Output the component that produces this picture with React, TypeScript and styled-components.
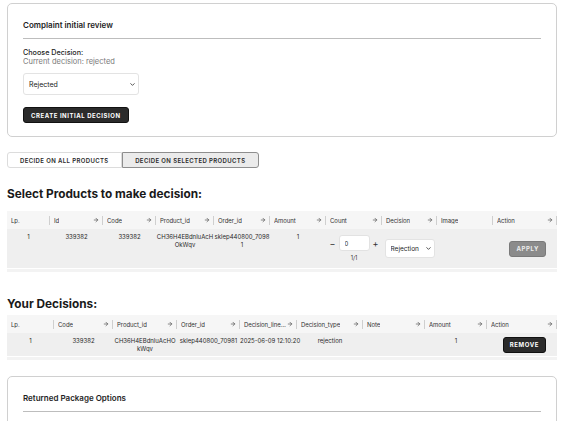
import React from "react";
import styled, { createGlobalStyle } from "styled-components";
import { ArrowRight, ChevronDown } from "lucide-react";

const GlobalStyle = createGlobalStyle`
  html, body {
    margin: 0;
    padding: 0;
    background: #ffffff;
  }
  body {
    font-family: Inter, "Noto Sans", "Liberation Sans", sans-serif;
    color: #222222;
  }
  * {
    box-sizing: border-box;
  }
`;

interface Column {
  readonly label: string;
  readonly sortable: boolean;
}

const productColumns: Column[] = [
  { label: "Lp.", sortable: false },
  { label: "Id", sortable: true },
  { label: "Code", sortable: true },
  { label: "Product_id", sortable: true },
  { label: "Order_id", sortable: true },
  { label: "Amount", sortable: true },
  { label: "Count", sortable: true },
  { label: "Decision", sortable: true },
  { label: "Image", sortable: false },
  { label: "Action", sortable: true },
];

const decisionColumns: Column[] = [
  { label: "Lp.", sortable: false },
  { label: "Code", sortable: true },
  { label: "Product_id", sortable: true },
  { label: "Order_id", sortable: true },
  { label: "Decision_line_created", sortable: true },
  { label: "Decision_type", sortable: true },
  { label: "Note", sortable: true },
  { label: "Amount", sortable: true },
  { label: "Action", sortable: true },
];

const productGrid = "43px 53px 53px 58px 56px 56px 56px 55px 56px 1fr";
const decisionGrid = "47px 59px 64px 63px 57px 66px 62px 62px 1fr";

export default function App() {
  return (
    <>
      <GlobalStyle />
      <Page>
        <Card>
          <CardTitle>Complaint initial review</CardTitle>
          <CardBody>
            <FieldLabel>Choose Decision:</FieldLabel>
            <Hint>Current decision: rejected</Hint>
            <SelectWrap width={116} height={22}>
              <Select defaultValue="rejected" fontSize={7}>
                <option value="rejected">Rejected</option>
                <option value="accepted">Accepted</option>
              </Select>
              <SelectIcon size={7} strokeWidth={2.6} />
            </SelectWrap>
            <DarkButton>Create initial decision</DarkButton>
          </CardBody>
        </Card>

        <Tabs>
          <Tab>Decide on all products</Tab>
          <Tab active>Decide on selected products</Tab>
        </Tabs>

        <SectionHeading>Select Products to make decision:</SectionHeading>
        <Table>
          <HeaderRow columns={productGrid}>
            {productColumns.map(c => (
              <HeaderCell key={c.label} column={c} />
            ))}
          </HeaderRow>
          <DataRow columns={productGrid} tall>
            <Cell>1</Cell>
            <Cell>339382</Cell>
            <Cell>339382</Cell>
            <Cell>CH36H4EBdnluAcHOkWqv</Cell>
            <Cell>sklep440800_70981</Cell>
            <Cell>1</Cell>
            <WidgetCell>
              <Counter>
                <StepSign>−</StepSign>
                <CountInput defaultValue="0" />
                <StepSign>+</StepSign>
              </Counter>
              <CountNote>1/1</CountNote>
            </WidgetCell>
            <WidgetCell>
              <SelectWrap width={50} height={19}>
                <Select defaultValue="rejection" fontSize={6.5}>
                  <option value="rejection">Rejection</option>
                  <option value="acceptance">Acceptance</option>
                </Select>
                <SelectIcon size={7} strokeWidth={2.6} />
              </SelectWrap>
            </WidgetCell>
            <Cell />
            <WidgetCell>
              <RowButton muted>Apply</RowButton>
            </WidgetCell>
          </DataRow>
          <TableFooter />
        </Table>

        <SectionHeading second>Your Decisions:</SectionHeading>
        <Table>
          <HeaderRow columns={decisionGrid}>
            {decisionColumns.map(c => (
              <HeaderCell key={c.label} column={c} />
            ))}
          </HeaderRow>
          <DataRow columns={decisionGrid}>
            <Cell>1</Cell>
            <Cell>339382</Cell>
            <Cell>CH36H4EBdnluAcHOkWqv</Cell>
            <Cell>sklep440800_70981</Cell>
            <Cell nowrap>2025-06-09 12:10:20</Cell>
            <Cell>rejection</Cell>
            <Cell />
            <Cell>1</Cell>
            <WidgetCell>
              <RowButton>Remove</RowButton>
            </WidgetCell>
          </DataRow>
          <TableFooter />
        </Table>

        <Card spaced>
          <CardTitle>Returned Package Options</CardTitle>
          <CardBody tall />
        </Card>
      </Page>
    </>
  );
}

interface HeaderCellProps {
  readonly column: Column;
}
function HeaderCell({ column }: HeaderCellProps) {
  return (
    <HeadCell>
      <HeadLabel>{column.label}</HeadLabel>
      {column.sortable && <SortIcon size={6} strokeWidth={2.5} />}
    </HeadCell>
  );
}

const Page = styled.div`
  padding: 3px 7px 0;
  display: flex;
  flex-direction: column;
`;

interface CardProps {
  readonly spaced?: boolean;
}
const Card = styled.section<CardProps>`
  border: 1px solid #d0d0d0;
  border-radius: 5px;
  padding: 0 15px 13px;
  margin-top: ${({ spaced }) => (spaced ? "16px" : "0")};
`;

const CardTitle = styled.h2`
  margin: 0;
  padding: 16px 0 8px;
  font-size: 8px;
  line-height: 10px;
  font-weight: 600;
  color: #1e1e1e;
  border-bottom: 1px solid #bdbdbd;
`;

interface CardBodyProps {
  readonly tall?: boolean;
}
const CardBody = styled.div<CardBodyProps>`
  display: flex;
  flex-direction: column;
  align-items: flex-start;
  padding-top: 9px;
  min-height: ${({ tall }) => (tall ? "80px" : "0")};
`;

const FieldLabel = styled.div`
  font-size: 7.2px;
  line-height: 9px;
  font-weight: 500;
  color: #1e1e1e;
`;

const Hint = styled.div`
  font-size: 7.5px;
  line-height: 10px;
  color: #7a7a7a;
`;

interface SelectWrapProps {
  readonly width: number;
  readonly height: number;
}
const SelectWrap = styled.div<SelectWrapProps>`
  position: relative;
  width: ${({ width }) => width}px;
  height: ${({ height }) => height}px;
  margin-top: ${({ width }) => (width > 80 ? "6px" : "0")};
`;

interface SelectProps {
  readonly fontSize: number;
}
const Select = styled.select<SelectProps>`
  appearance: none;
  display: block;
  width: 100%;
  height: 100%;
  border: 1px solid #e3e3e3;
  border-radius: 3px;
  background: #ffffff;
  padding: 0 0 0 5px;
  font-family: inherit;
  font-size: ${({ fontSize }) => fontSize}px;
  color: #222222;
  outline: none;
`;

const SelectIcon = styled(ChevronDown)`
  position: absolute;
  right: 3px;
  top: calc(50% - ${({ size }) => Number(size) / 2}px);
  color: #222222;
  pointer-events: none;
`;

const DarkButton = styled.button`
  margin-top: 12px;
  height: 16px;
  padding: 0 7px;
  border: 1px solid #111111;
  border-radius: 3px;
  background: #2b2b2b;
  color: #ffffff;
  font-family: inherit;
  font-size: 6px;
  font-weight: 700;
  letter-spacing: 0.55px;
  text-transform: uppercase;
`;

const Tabs = styled.div`
  display: flex;
  margin-top: 15px;
`;

interface TabProps {
  readonly active?: boolean;
}
const Tab = styled.button<TabProps>`
  height: 16px;
  padding: 0 ${({ active }) => (active ? "12.5px" : "12px")};
  border: 1px solid ${({ active }) => (active ? "#8e8e8e" : "#dcdcdc")};
  border-radius: ${({ active }) => (active ? "0 3px 3px 0" : "3px 0 0 3px")};
  background: ${({ active }) => (active ? "#ebebeb" : "#ffffff")};
  color: #2a2a2a;
  font-family: inherit;
  font-size: 6px;
  font-weight: 600;
  letter-spacing: 0.38px;
  text-transform: uppercase;
`;

interface SectionHeadingProps {
  readonly second?: boolean;
}
const SectionHeading = styled.h1<SectionHeadingProps>`
  margin: ${({ second }) => (second ? "25px 0 3px" : "19px 0 9px")};
  font-size: 11.8px;
  line-height: 15px;
  font-weight: 700;
  color: #1a1a1a;
`;

const Table = styled.div`
  display: flex;
  flex-direction: column;
`;

interface RowProps {
  readonly columns: string;
  readonly tall?: boolean;
}
const HeaderRow = styled.div<RowProps>`
  display: grid;
  grid-template-columns: ${({ columns }) => columns};
  height: 18px;
  background: #f6f6f6;
`;

const HeadCell = styled.div`
  position: relative;
  display: flex;
  align-items: center;
  justify-content: space-between;
  padding: 0 4px 0 4px;
  min-width: 0;

  &::after {
    content: "";
    position: absolute;
    right: 0;
    top: 5px;
    width: 1px;
    height: 9px;
    background: #cfcfcf;
  }
`;

const HeadLabel = styled.span`
  font-size: 6px;
  letter-spacing: -0.05px;
  color: #333333;
  white-space: nowrap;
  overflow: hidden;
  text-overflow: ellipsis;
  min-width: 0;
`;

const SortIcon = styled(ArrowRight)`
  flex: none;
  color: #444444;
  margin-left: 1px;
`;

const DataRow = styled.div<RowProps>`
  display: grid;
  grid-template-columns: ${({ columns }) => columns};
  min-height: ${({ tall }) => (tall ? "39px" : "23px")};
  background: #efefef;
`;

interface CellProps {
  readonly nowrap?: boolean;
}
const Cell = styled.div<CellProps>`
  padding: 4px 0;
  font-size: 6px;
  line-height: 7.5px;
  text-align: center;
  color: #2a2a2a;
  word-break: break-all;
  white-space: ${({ nowrap }) => (nowrap ? "nowrap" : "normal")};
  min-width: 0;
`;

const WidgetCell = styled.div`
  display: flex;
  flex-direction: column;
  align-items: center;
  justify-content: center;
  min-width: 0;
`;

const Counter = styled.div`
  display: flex;
  align-items: center;
  gap: 3px;
`;

const StepSign = styled.span`
  font-size: 9px;
  line-height: 9px;
  color: #333333;
`;

const CountInput = styled.input`
  width: 31px;
  height: 16px;
  border: 1px solid #e2e2e2;
  border-radius: 3px;
  background: #ffffff;
  padding: 0 5px;
  font-family: inherit;
  font-size: 6px;
  color: #222222;
  outline: none;
`;

const CountNote = styled.div`
  margin-top: 4px;
  font-size: 5.5px;
  line-height: 7px;
  color: #333333;
`;

interface RowButtonProps {
  readonly muted?: boolean;
}
const RowButton = styled.button<RowButtonProps>`
  align-self: flex-end;
  margin-right: 11px;
  height: 16px;
  padding: 0 6px;
  border: 1px solid ${({ muted }) => (muted ? "#7a7a7a" : "#111111")};
  border-radius: 3px;
  background: ${({ muted }) => (muted ? "#8b8b8b" : "#2b2b2b")};
  color: ${({ muted }) => (muted ? "#ededed" : "#ffffff")};
  font-family: inherit;
  font-size: 6px;
  font-weight: 700;
  letter-spacing: 0.6px;
  text-transform: uppercase;
`;

const TableFooter = styled.div`
  margin-top: 1px;
  height: 3px;
  background: #f3f3f3;
`;
